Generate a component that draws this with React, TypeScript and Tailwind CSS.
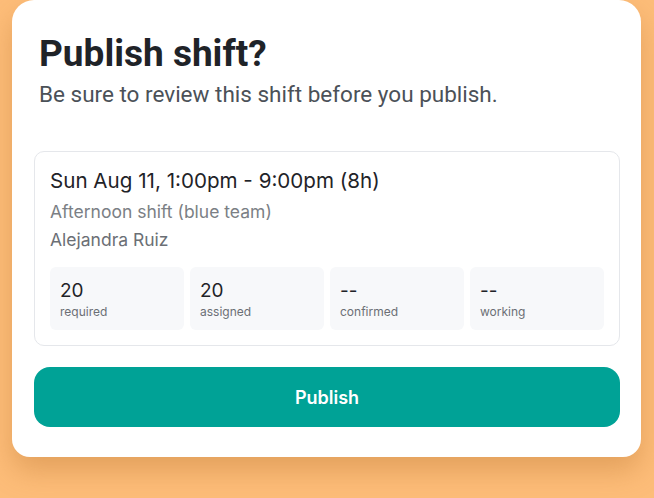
export default function App() {
  const stats = [
    { value: '20', label: 'required' },
    { value: '20', label: 'assigned' },
    { value: '--', label: 'confirmed' },
    { value: '--', label: 'working' },
  ];

  return (
    <main
      className="h-[498px] w-[654px] overflow-hidden bg-[#fdbd79] pl-[12px]"
      style={{ fontFamily: 'Inter, "Noto Sans", sans-serif' }}
    >
      <div className="w-[629px] h-[457px] rounded-b-[18px] rounded-t-[22px] bg-white pl-[22px] pr-[21px] pt-[32px] shadow-[0_14px_28px_rgba(180,110,40,0.35)]">
        {/* heading uses Roboto */}
        <div style={{ fontFamily: 'Roboto, "Noto Sans", sans-serif' }}>
          <h1 className="pl-[5px] text-[37px] font-bold leading-[44px] text-[#1f2328]">Publish shift?</h1>
          <p className="mt-[4px] pl-[5px] text-[22.5px] leading-[28px] text-[#4b5158]">
            Be sure to review this shift before you publish.
          </p>
        </div>

        <section className="mt-[43px] rounded-[10px] border border-[#e5e7eb] px-[15px] pb-[15px] pt-[15px]">
          <div className="text-[20.6px] leading-[28px] text-[#1f2328]">Sun Aug 11, 1:00pm - 9:00pm (8h)</div>
          <div className="mt-[3px] text-[17.5px] leading-[28px] text-[#7b7f85]">Afternoon shift (blue team)</div>
          <div className="text-[17.5px] leading-[28px] text-[#6b6f75]">Alejandra Ruiz</div>
          <div className="mt-[13px] grid grid-cols-4 gap-[6px]">
            {stats.map((s) => (
              <div key={s.label} className="h-[63px] rounded-[6px] bg-[#f7f8fa] px-[10px] pt-[13px]">
                <div className="text-[19px] leading-[22px] text-[#1f2328]">{s.value}</div>
                <div className="mt-[2px] text-[12px] leading-[16px] text-[#6b6f75]">{s.label}</div>
              </div>
            ))}
          </div>
        </section>

        <button className="mt-[21px] h-[60px] w-full rounded-[16px] bg-[#00a296] text-[18px] font-semibold text-white">
          Publish
        </button>
      </div>
    </main>
  );
}
